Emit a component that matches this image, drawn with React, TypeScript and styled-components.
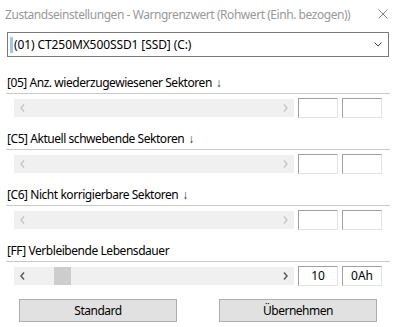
import * as React from "react";
import styled, { createGlobalStyle } from "styled-components";

const GlobalStyle = createGlobalStyle`
  html, body {
    margin: 0;
    padding: 0;
    background: #ffffff;
  }
  body {
    font-family: "Noto Sans", "Open Sans", sans-serif;
    font-size: 12px;
    letter-spacing: -0.45px;
    color: #000;
  }
`;

const Window = styled.div`
  width: 396px;
  height: 327px;
  display: flex;
  flex-direction: column;
  background: #fff;
  overflow: hidden;
`;

const TitleBar = styled.div`
  height: 29px;
  display: flex;
  align-items: center;
  justify-content: space-between;
  padding: 0 8px 0 5px;
  color: #999999;
  font-size: 12px;
  white-space: nowrap;
`;

const CloseIcon = styled.svg`
  width: 10px;
  height: 10px;
  margin-top: -2px;
`;

const Combo = styled.div`
  margin: 3px 7px 0 7px;
  height: 23px;
  border: 1px solid #7a7a7a;
  display: flex;
  align-items: center;
  padding: 0 4px 0 2px;
`;

const Caret = styled.span`
  width: 3px;
  height: 16px;
  background: #99c9ef;
  margin-right: 1px;
`;

const ComboText = styled.span`
  flex: 1;
  white-space: nowrap;
  letter-spacing: -0.1px;
`;

const Chevron = styled.svg`
  width: 8px;
  height: 5px;
  margin-right: 2px;
`;

const Section = styled.section`
  display: flex;
  flex-direction: column;
  padding-top: 13px;
  &:first-of-type {
    padding-top: 18px;
  }
`;

const Label = styled.div`
  height: 16px;
  line-height: 16px;
  padding-left: 7px;
  white-space: nowrap;
`;

const DownMark = styled.span`
  color: #333;
  margin-left: 4px;
`;

const Divider = styled.hr`
  margin: 2px 6px 0 6px;
  border: 0;
  border-top: 1px solid #c8c8c8;
  height: 0;
`;

const Row = styled.div`
  display: flex;
  align-items: center;
  gap: 4px;
  padding-left: 14px;
  margin-top: 4px;
  height: 20px;
`;

const ScrollBar = styled.div`
  width: 280px;
  height: 18px;
  background: #f0f0f0;
  display: flex;
  align-items: center;
  justify-content: space-between;
  position: relative;
`;

const Arrow = styled.svg<{ $active?: boolean }>`
  width: 5px;
  height: 8px;
  margin: 0 6px;
  color: ${(p) => (p.$active ? "#606060" : "#c0c0c0")};
`;

const Thumb = styled.div`
  position: absolute;
  left: 40px;
  top: 0;
  width: 17px;
  height: 18px;
  background: #cdcdcd;
`;

const Field = styled.div`
  width: 38px;
  height: 18px;
  background: #fff;
  border-top: 1px solid #a0a0a0;
  border-left: 1px solid #a0a0a0;
  border-right: 1px solid #e3e3e3;
  border-bottom: 1px solid #e3e3e3;
  text-align: center;
  line-height: 18px;
  letter-spacing: 0;
`;

const ButtonRow = styled.div`
  display: flex;
  justify-content: space-between;
  padding: 0 19px;
  margin-top: 13px;
`;

const Button = styled.button`
  width: 158px;
  height: 23px;
  background: #e1e1e1;
  border: 1px solid #adadad;
  font-family: inherit;
  font-size: 12px;
  letter-spacing: -0.5px;
  color: #000;
  padding: 0;
`;

const ArrowLeft = ({ active }: { active?: boolean }) => (
  <Arrow $active={active} viewBox="0 0 5 8">
    <path d="M4 0.5 L1 4 L4 7.5" fill="none" stroke="currentColor" strokeWidth={active ? 1.6 : 1.2} />
  </Arrow>
);

const ArrowRight = ({ active }: { active?: boolean }) => (
  <Arrow $active={active} viewBox="0 0 5 8">
    <path d="M1 0.5 L4 4 L1 7.5" fill="none" stroke="currentColor" strokeWidth={active ? 1.6 : 1.2} />
  </Arrow>
);

interface Attr {
  id: string;
  name: string;
  down: boolean;
  active: boolean;
  value: string;
  raw: string;
}

const attrs: Attr[] = [
  { id: "05", name: "Anz. wiederzugewiesener Sektoren", down: true, active: false, value: "", raw: "" },
  { id: "C5", name: "Aktuell schwebende Sektoren", down: true, active: false, value: "", raw: "" },
  { id: "C6", name: "Nicht korrigierbare Sektoren", down: true, active: false, value: "", raw: "" },
  { id: "FF", name: "Verbleibende Lebensdauer", down: false, active: true, value: "10", raw: "0Ah" },
];

const App = () => {
  return (
    <Window>
      <GlobalStyle />
      <TitleBar>
        <span>Zustandseinstellungen - Warngrenzwert (Rohwert (Einh. bezogen))</span>
        <CloseIcon viewBox="0 0 10 10">
          <path d="M0.5 0.5 L9.5 9.5 M9.5 0.5 L0.5 9.5" stroke="#8a8a8a" strokeWidth="1" fill="none" />
        </CloseIcon>
      </TitleBar>
      <Combo>
        <Caret />
        <ComboText>(01) CT250MX500SSD1 [SSD] (C:)</ComboText>
        <Chevron viewBox="0 0 8 5">
          <path d="M0.5 0.5 L4 4 L7.5 0.5" stroke="#404040" strokeWidth="1" fill="none" />
        </Chevron>
      </Combo>
      {attrs.map((a) => (
        <Section key={a.id}>
          <Label>
            [{a.id}] {a.name}
            {a.down && <DownMark>↓</DownMark>}
          </Label>
          <Divider />
          <Row>
            <ScrollBar>
              <ArrowLeft active={a.active} />
              {a.active && <Thumb />}
              <ArrowRight active={a.active} />
            </ScrollBar>
            <Field>{a.value}</Field>
            <Field>{a.raw}</Field>
          </Row>
        </Section>
      ))}
      <ButtonRow>
        <Button>Standard</Button>
        <Button>Übernehmen</Button>
      </ButtonRow>
    </Window>
  );
};

export default App;
